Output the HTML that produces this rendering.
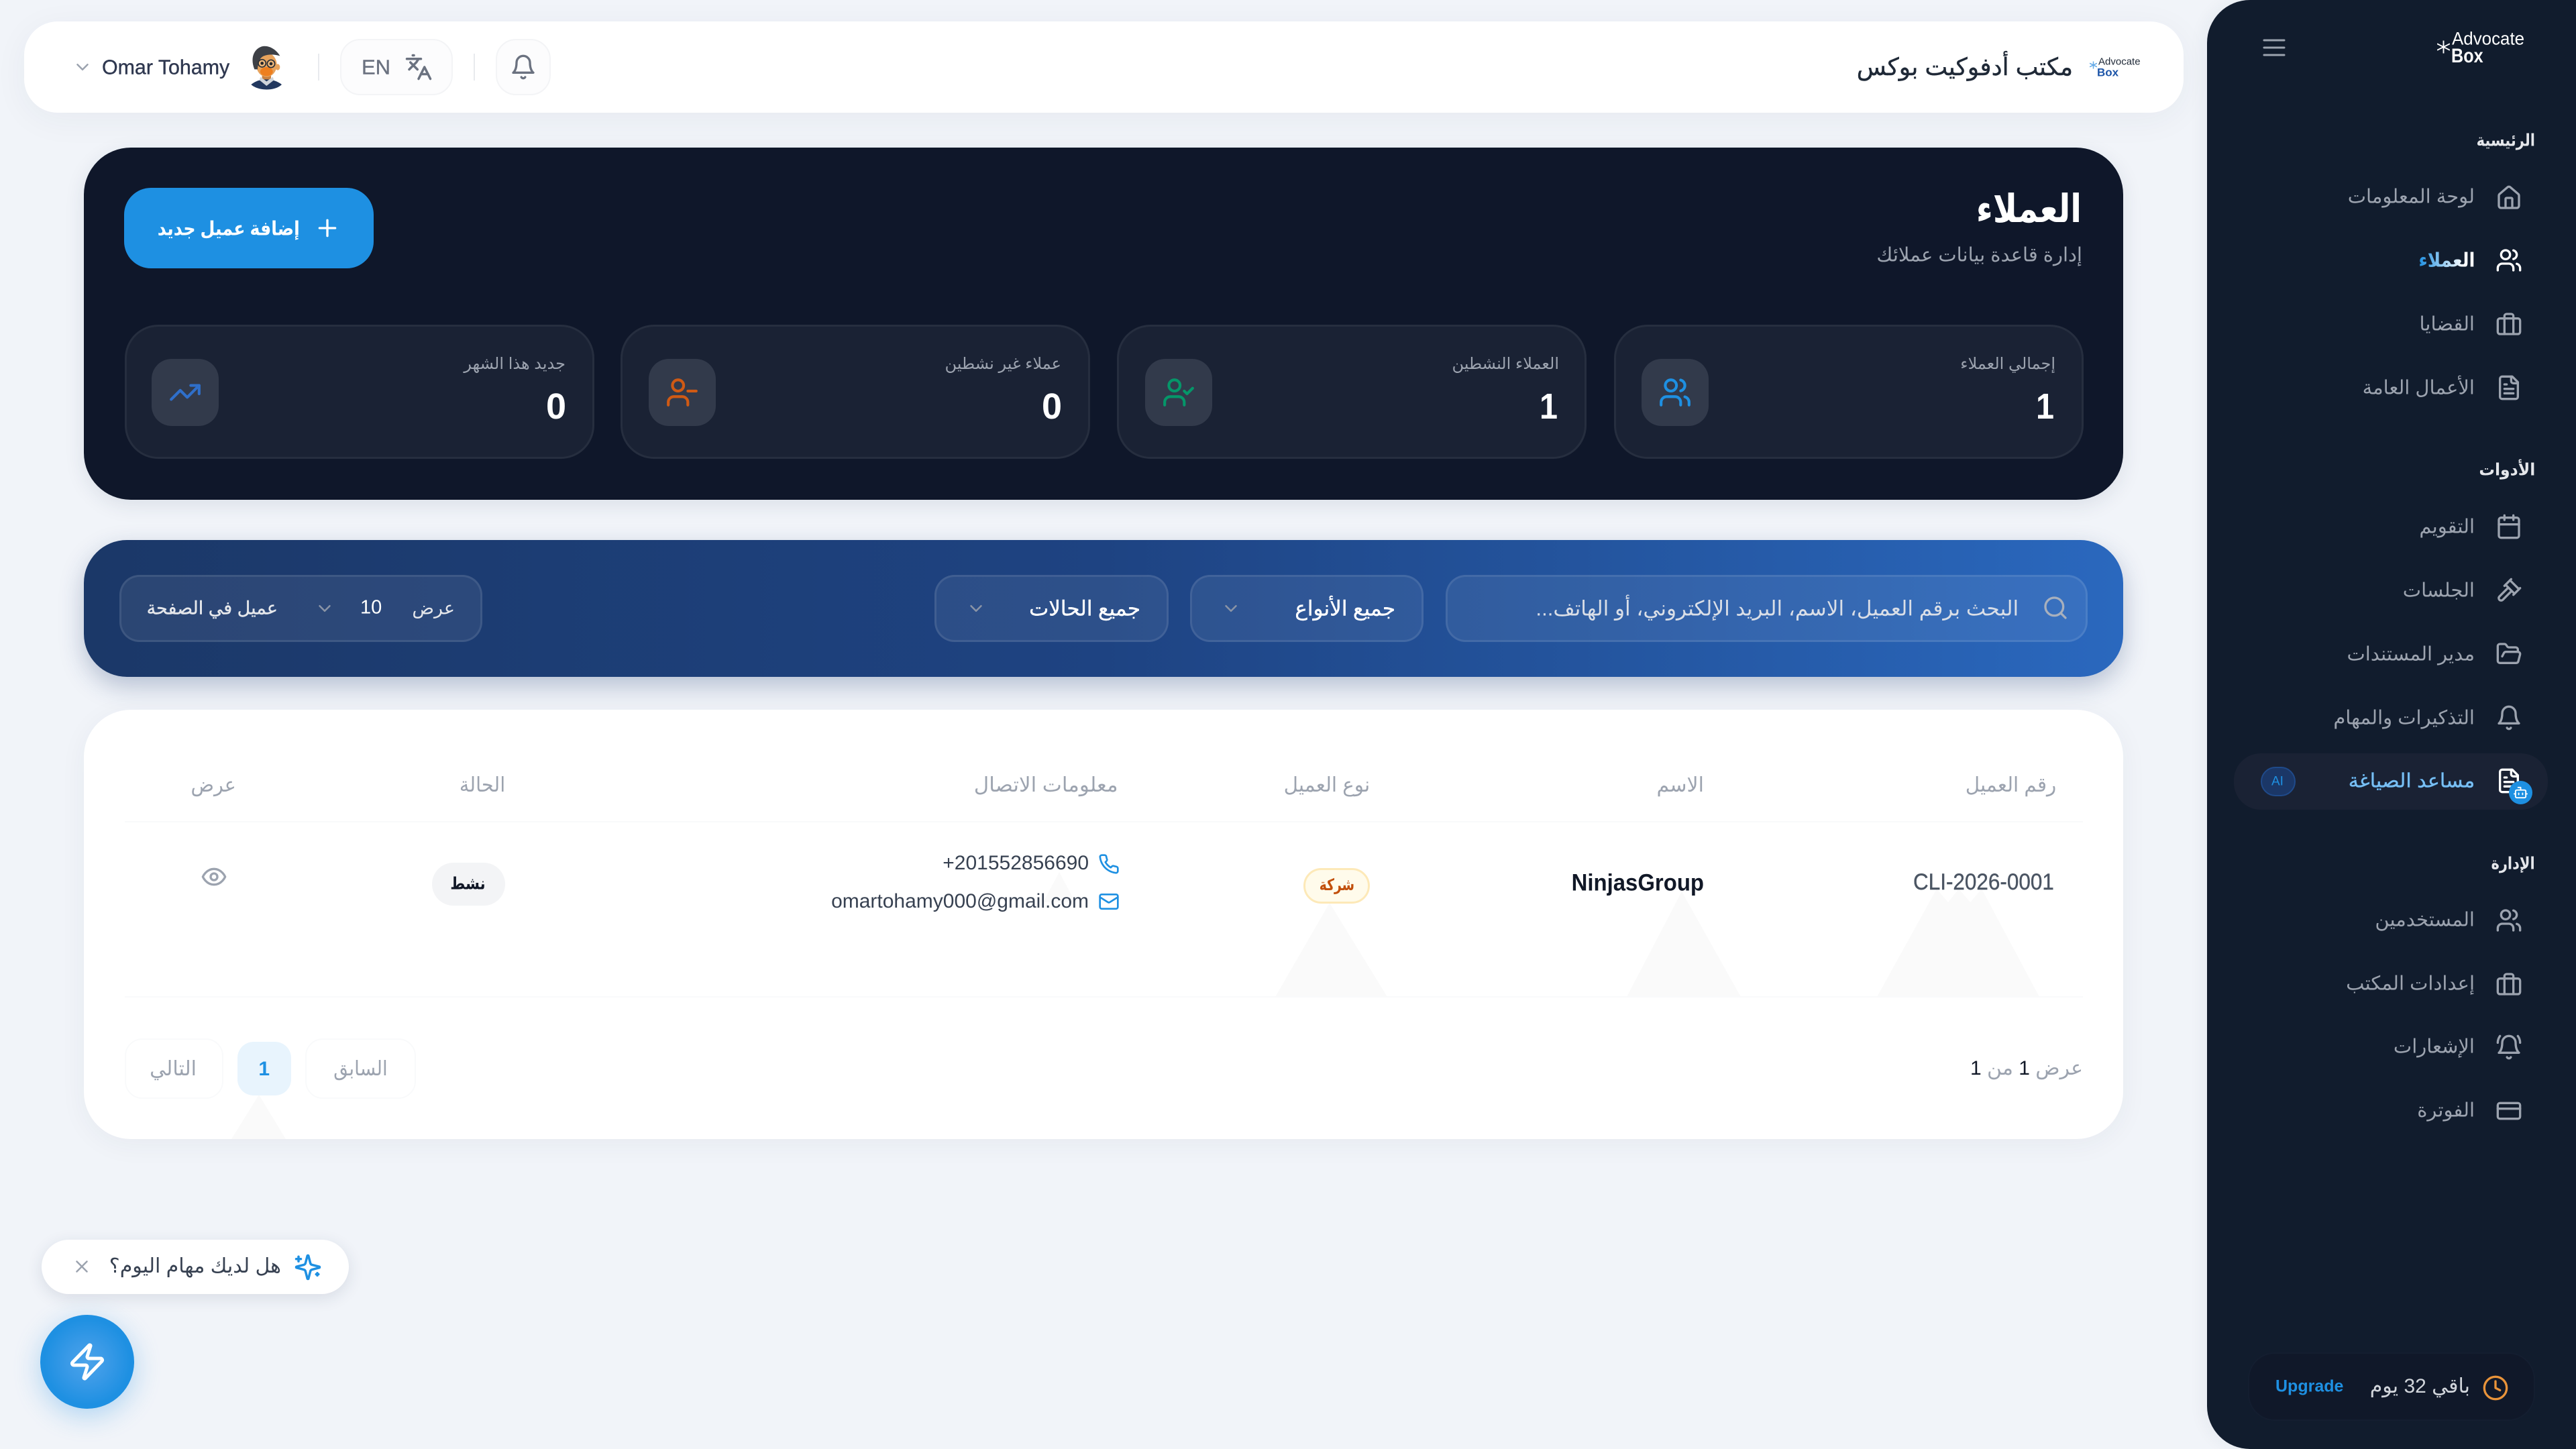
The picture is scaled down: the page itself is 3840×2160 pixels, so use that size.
<!DOCTYPE html>
<html lang="ar" dir="rtl"><head><meta charset="utf-8"><title>العملاء</title>
<style>
*{box-sizing:border-box;margin:0;padding:0}
html,body{width:3840px;height:2160px;overflow:hidden;background:#f1f4f9;font-family:"Liberation Sans","DejaVu Sans",sans-serif}
.a{position:absolute}
.t{position:absolute;white-space:nowrap;line-height:1;transform:translateY(-50%) scaleX(var(--sx,1));transform-origin:100% 50%;direction:rtl}
.l{direction:ltr}
.m{-webkit-text-stroke:.4px currentColor}
svg.i{position:absolute;fill:none;stroke:currentColor;stroke-width:2;stroke-linecap:round;stroke-linejoin:round}
.stat{position:absolute;top:484px;width:700px;height:200px;background:#1a2234;border:3px solid #262e3f;border-radius:50px}
.box{position:absolute;top:535px;width:100px;height:100px;border-radius:30px;background:#323a4b}
.lab{font-size:24px;color:#9ca3af;top:543px}
.num{font-size:54px;font-weight:700;color:#fff;top:606px}
.sel{position:absolute;top:857px;height:100px;border-radius:30px;background:rgba(255,255,255,.07);border:3px solid rgba(255,255,255,.09)}
.th{font-size:30px;color:#9ca3af;top:1171px}
.nav{font-size:29px;color:#9ca3af;right:151px}
.sec{font-size:25px;font-weight:700;color:#e5e7eb;right:61px}
.side svg.i{color:#9ca3af;width:40px;height:40px;left:3720px}
.grad{background:linear-gradient(270deg,#fff 20%,#1e90e2 100%);-webkit-background-clip:text;background-clip:text;color:transparent;font-weight:700}
</style></head><body>
<svg width="0" height="0" style="position:absolute"><defs>
<symbol id="users" viewBox="0 0 24 24"><path d="M16 21v-2a4 4 0 0 0-4-4H6a4 4 0 0 0-4 4v2"/><circle cx="9" cy="7" r="4"/><path d="M22 21v-2a4 4 0 0 0-3-3.87"/><path d="M16 3.13a4 4 0 0 1 0 7.75"/></symbol>
<symbol id="brief" viewBox="0 0 24 24"><rect x="2" y="7" width="20" height="14" rx="2"/><path d="M16 21V5a2 2 0 0 0-2-2h-4a2 2 0 0 0-2 2v16"/></symbol>
<symbol id="file" viewBox="0 0 24 24"><path d="M15 2H6a2 2 0 0 0-2 2v16a2 2 0 0 0 2 2h12a2 2 0 0 0 2-2V7Z"/><path d="M14 2v4a2 2 0 0 0 2 2h4"/><path d="M10 9H8"/><path d="M16 13H8"/><path d="M16 17H8"/></symbol>
<symbol id="bell" viewBox="0 0 24 24"><path d="M6 8a6 6 0 0 1 12 0c0 7 3 9 3 9H3s3-2 3-9"/><path d="M10.3 21a1.94 1.94 0 0 0 3.4 0"/></symbol>
<symbol id="chev" viewBox="0 0 24 24"><path d="m6 9 6 6 6-6"/></symbol>
</defs></svg>

<!-- header -->
<div class="a" style="left:36px;top:32px;width:3219px;height:136px;background:#fff;border-radius:50px;box-shadow:0 10px 50px rgba(30,50,80,.05)"></div>
<svg class="i" style="left:108px;top:85px;width:30px;height:30px;color:#9ca3af"><use href="#chev"/></svg>
<div class="t l m" style="left:152px;top:100px;font-size:31px;font-weight:500;color:#2f3850;--sx:.98;transform-origin:0 50%">Omar Tohamy</div>
<svg class="a" style="left:340px;top:50px" width="110" height="100" viewBox="0 0 330 300">
<circle cx="172" cy="152" r="104" fill="#fff"/>
<rect x="152" y="175" width="40" height="45" fill="#c9803f"/>
<path d="M103 228C125 210 150 205 172 205c23 0 48 7 68 23-30 30-105 30-137 0z" fill="#22385f"/>
<path d="M140 208l32 26 33-26-5-14-28 20-27-20z" fill="#cfd4da"/>
<ellipse cx="222" cy="150" rx="10" ry="14" fill="#e8a35c"/>
<ellipse cx="172" cy="140" rx="46" ry="54" fill="#e8a35c"/>
<ellipse cx="172" cy="170" rx="28" ry="20" fill="#ee7f1f"/>
<path d="M118 160C98 110 115 70 150 58c30-8 65 12 82 42-27-8-52-8-72 0-20 8-25 30-28 60z" fill="#3d4046"/>
<circle cx="152" cy="133" r="17" fill="#f0b97a" stroke="#2b2f36" stroke-width="5"/><circle cx="192" cy="135" r="17" fill="#f0b97a" stroke="#2b2f36" stroke-width="5"/>
<circle cx="152" cy="133" r="7" fill="#22252b"/><circle cx="192" cy="135" r="7" fill="#22252b"/>
</svg>
<div class="a" style="left:474px;top:80px;width:2px;height:40px;background:#e8eaee"></div>
<div class="a" style="left:507px;top:58px;width:168px;height:84px;border-radius:30px;background:#fcfcfd;border:2px solid #f3f4f6"></div>
<div class="t l m" style="left:539px;top:100px;font-size:31px;font-weight:500;color:#6b7280;transform-origin:0 50%">EN</div>
<svg class="i" viewBox="0 0 24 24" style="left:603px;top:79px;width:42px;height:42px;color:#6b7280"><path d="m5 8 6 6"/><path d="m4 14 6-6 2-3"/><path d="M2 5h12"/><path d="M7 2h1"/><path d="m22 22-5-10-5 10"/><path d="M14 18h6"/></svg>
<div class="a" style="left:706px;top:80px;width:2px;height:40px;background:#e8eaee"></div>
<div class="a" style="left:739px;top:58px;width:82px;height:84px;border-radius:30px;background:#fcfcfd;border:2px solid #f3f4f6"></div>
<svg class="i" style="left:760px;top:80px;width:40px;height:40px;color:#6b7280"><use href="#bell"/></svg>
<div class="t m" style="right:750px;top:100px;font-size:36px;font-weight:500;color:#1f2937">مكتب أدفوكيت بوكس</div>
<div class="t l" style="left:3128px;top:92px;font-size:15px;color:#1f2937;transform-origin:0 50%">Advocate</div>
<div class="t l" style="left:3126px;top:108px;font-size:17px;font-weight:700;color:#1d55a8;transform-origin:0 50%">Box</div>
<svg class="a" style="left:3115px;top:91px" width="11" height="12" viewBox="0 0 12 12" stroke="#62a8e6" stroke-width="1.6"><path d="M6 0v12M0 3l12 6M12 3 0 9"/></svg>

<!-- hero -->
<div class="a" style="left:125px;top:220px;width:3040px;height:525px;background:#0f172a;border-radius:70px;box-shadow:0 8px 30px rgba(30,50,80,.1)"></div>
<div class="a" style="left:185px;top:280px;width:372px;height:120px;background:#1e90e2;border-radius:40px"></div>
<svg class="i" viewBox="0 0 24 24" style="left:468px;top:320px;width:40px;height:40px;color:#fff"><path d="M5 12h14"/><path d="M12 5v14"/></svg>
<div class="t" style="right:3393px;top:342px;font-size:29px;font-weight:700;color:#fff;--sx:.87">إضافة عميل جديد</div>
<div class="t" style="right:737px;top:312px;font-size:58px;font-weight:700;color:#fff;--sx:.84">العملاء</div>
<div class="t" style="right:736px;top:381px;font-size:29px;color:#9ca3af">إدارة قاعدة بيانات عملائك</div>

<div class="stat" style="left:2406px"></div><div class="stat" style="left:1665px"></div><div class="stat" style="left:925px"></div><div class="stat" style="left:186px"></div>
<div class="box" style="left:2447px"></div><div class="box" style="left:1707px"></div><div class="box" style="left:967px"></div><div class="box" style="left:226px"></div>
<svg class="i" style="left:2472px;top:560px;width:50px;height:50px;color:#1e90e2"><use href="#users"/></svg>
<svg class="i" viewBox="0 0 24 24" style="left:1732px;top:560px;width:50px;height:50px;color:#059669"><path d="M16 21v-2a4 4 0 0 0-4-4H6a4 4 0 0 0-4 4v2"/><circle cx="9" cy="7" r="4"/><path d="m16 11 2 2 4-4"/></svg>
<svg class="i" viewBox="0 0 24 24" style="left:992px;top:560px;width:50px;height:50px;color:#d05a14"><path d="M16 21v-2a4 4 0 0 0-4-4H6a4 4 0 0 0-4 4v2"/><circle cx="9" cy="7" r="4"/><path d="M22 11h-6"/></svg>
<svg class="i" viewBox="0 0 24 24" style="left:251px;top:560px;width:50px;height:50px;color:#2f6fca"><path d="M22 7 13.500 15.500 8.500 10.500 2 17"/><path d="M16 7h6v6"/></svg>
<div class="t lab" style="right:776px">إجمالي العملاء</div>
<div class="t lab" style="right:1516px">العملاء النشطين</div>
<div class="t lab" style="right:2258px">عملاء غير نشطين</div>
<div class="t lab" style="right:2997px">جديد هذا الشهر</div>
<div class="t num l" style="right:778px;--sx:.9">1</div>
<div class="t num l" style="right:1518px;--sx:.9">1</div>
<div class="t num l" style="right:2257px">0</div>
<div class="t num l" style="right:2996px">0</div>

<!-- filter bar -->
<div class="a" style="left:125px;top:805px;width:3040px;height:204px;border-radius:64px;background:linear-gradient(90deg,#1b3868 0%,#1e4382 50%,#2a68be 100%);box-shadow:0 14px 36px rgba(30,58,110,.28)"></div>
<div class="sel" style="left:2155px;width:957px"></div>
<div class="sel" style="left:1774px;width:348px"></div>
<div class="sel" style="left:1393px;width:349px"></div>
<div class="sel" style="left:178px;width:541px"></div>
<svg class="i" viewBox="0 0 24 24" style="left:3044px;top:886px;width:40px;height:40px;color:#a8b0bd"><circle cx="11" cy="11" r="8"/><path d="m21 21-4.300-4.300"/></svg>
<div class="t" style="right:831px;top:907px;font-size:31px;color:#d9dee7;--sx:1.005">البحث برقم العميل، الاسم، البريد الإلكتروني، أو الهاتف...</div>
<div class="t m" style="right:1760px;top:907px;font-size:31px;font-weight:500;color:#fff">جميع الأنواع</div>
<svg class="i" style="left:1820px;top:892px;width:30px;height:30px;color:#8a94a6"><use href="#chev"/></svg>
<div class="t m" style="right:2140px;top:907px;font-size:31px;font-weight:500;color:#fff">جميع الحالات</div>
<svg class="i" style="left:1440px;top:892px;width:30px;height:30px;color:#8a94a6"><use href="#chev"/></svg>
<div class="t" style="right:3162px;top:907px;font-size:27px;color:#e5e7eb">عرض</div>
<div class="t l" style="left:537px;top:906px;font-size:29px;color:#fff;transform-origin:0 50%">10</div>
<svg class="i" style="left:469px;top:892px;width:30px;height:30px;color:#8a94a6"><use href="#chev"/></svg>
<div class="t m" style="right:3426px;top:907px;font-size:27px;font-weight:500;color:#e5e7eb">عميل في الصفحة</div>

<!-- table -->
<div class="a" style="left:125px;top:1058px;width:3040px;height:640px;background:#fff;border-radius:70px;box-shadow:0 8px 40px rgba(30,50,80,.05)"></div>
<svg class="a" style="left:0;top:0" width="3840" height="2160" fill="#fafafa">
<polygon points="2798,1486 2887,1325 2904,1345 2920,1325 2937,1345 2954,1325 3040,1486"/>
<polygon points="2425,1486 2507,1329 2595,1486"/>
<polygon points="1901,1486 1982,1346 2068,1486"/>
<polygon points="1555,1345 1579,1300 1603,1345"/>
<polygon points="345,1698 386,1632 426,1698"/>
</svg>
<div class="a" style="left:186px;top:1224px;width:2919px;height:2px;background:#f9fafb"></div>
<div class="a" style="left:186px;top:1485px;width:2919px;height:2px;background:#f9fafb"></div>
<div class="t th" style="right:775px;--sx:.98">رقم العميل</div>
<div class="t th" style="right:1300px">الاسم</div>
<div class="t th" style="right:1798px;--sx:.98">نوع العميل</div>
<div class="t th" style="right:2173px;--sx:1.03">معلومات الاتصال</div>
<div class="t th" style="right:3087px;--sx:.96">الحالة</div>
<div class="t th" style="right:3488px;--sx:.95">عرض</div>
<div class="t l m" style="right:778px;top:1315px;font-size:34px;font-weight:500;color:#4b5563;--sx:.925">CLI-2026-0001</div>
<div class="t l" style="right:1300px;top:1316px;font-size:35px;font-weight:700;color:#111827;--sx:.94">NinjasGroup</div>
<div class="a" style="left:1943px;top:1294px;width:99px;height:53px;border-radius:27px;background:#fffbeb;border:3px solid #fde9b8"></div>
<div class="t" style="right:1821px;top:1320px;font-size:24px;font-weight:700;color:#c2500c;--sx:.78">شركة</div>
<div class="t l" style="right:2217px;top:1287px;font-size:30px;color:#374151">+201552856690</div>
<div class="t l" style="right:2217px;top:1344px;font-size:30px;color:#374151">omartohamy000@gmail.com</div>
<svg class="i" viewBox="0 0 24 24" style="left:1637px;top:1272px;width:32px;height:32px;color:#1e90e2"><path d="M22 16.920v3a2 2 0 0 1-2.180 2 19.790 19.790 0 0 1-8.630-3.070 19.500 19.500 0 0 1-6-6 19.790 19.790 0 0 1-3.070-8.670A2 2 0 0 1 4.110 2h3a2 2 0 0 1 2 1.720 12.840 12.840 0 0 0 .7 2.810 2 2 0 0 1-.45 2.110L8.090 9.910a16 16 0 0 0 6 6l1.270-1.270a2 2 0 0 1 2.110-.45 12.840 12.840 0 0 0 2.810.7A2 2 0 0 1 22 16.920z"/></svg>
<svg class="i" viewBox="0 0 24 24" style="left:1637px;top:1328px;width:32px;height:32px;color:#1e90e2"><rect x="2" y="4" width="20" height="16" rx="2"/><path d="m22 7-8.970 5.700a1.940 1.940 0 0 1-2.060 0L2 7"/></svg>
<div class="a" style="left:644px;top:1286px;width:109px;height:64px;border-radius:32px;background:#f3f4f6"></div>
<div class="t" style="right:3116px;top:1318px;font-size:25px;font-weight:700;color:#111827;--sx:.85">نشط</div>
<svg class="i" viewBox="0 0 24 24" style="left:299px;top:1287px;width:40px;height:40px;color:#9ca3af"><path d="M2 12s3-7 10-7 10 7 10 7-3 7-10 7-10-7-10-7Z"/><circle cx="12" cy="12" r="3"/></svg>
<div class="a" style="left:186px;top:1548px;width:147px;height:90px;border-radius:26px;background:#fff;border:2px solid #f9fafb"></div>
<div class="a" style="left:354px;top:1553px;width:80px;height:80px;border-radius:24px;background:#e8f4fd"></div>
<div class="a" style="left:455px;top:1548px;width:165px;height:90px;border-radius:26px;background:#fff;border:2px solid #f9fafb"></div>
<div class="t" style="right:3547px;top:1594px;font-size:30px;color:#9ca3af">التالي</div>
<div class="t l" style="right:3438px;top:1594px;font-size:30px;font-weight:700;color:#1e90e2">1</div>
<div class="t" style="right:3262px;top:1594px;font-size:30px;color:#9ca3af;--sx:.93">السابق</div>
<div class="t" style="right:735px;top:1593px;font-size:30px;color:#9ca3af">عرض <span style="color:#111827">1</span> من <span style="color:#111827">1</span></div>

<!-- floating -->
<div class="a" style="left:62px;top:1848px;width:458px;height:81px;border-radius:41px;background:#fff;box-shadow:0 6px 24px rgba(30,50,80,.12)"></div>
<svg class="i" viewBox="0 0 24 24" style="left:438px;top:1868px;width:42px;height:42px;color:#1e90e2;transform:scaleX(-1)"><path d="M9.937 15.500A2 2 0 0 0 8.500 14.063l-6.135-1.582a.5.5 0 0 1 0-.962L8.500 9.936A2 2 0 0 0 9.937 8.500l1.582-6.135a.5.5 0 0 1 .963 0L14.063 8.500A2 2 0 0 0 15.500 9.937l6.135 1.581a.5.5 0 0 1 0 .964L15.500 14.063a2 2 0 0 0-1.437 1.437l-1.582 6.135a.5.5 0 0 1-.963 0z"/><path d="M20 3v4"/><path d="M22 5h-4"/><path d="M4 17v2"/><path d="M5 18H3"/></svg>
<div class="t" style="right:3421px;top:1888px;font-size:30px;color:#374151">هل لديك مهام اليوم؟</div>
<svg class="i" viewBox="0 0 24 24" style="left:107px;top:1873px;width:30px;height:30px;color:#9ca3af"><path d="M18 6 6 18"/><path d="m6 6 12 12"/></svg>
<div class="a" style="left:60px;top:1960px;width:140px;height:140px;border-radius:50%;background:radial-gradient(circle,#4aa3ea 0%,#3a9ae7 30%,#1e90e2 65%);box-shadow:0 10px 40px rgba(30,144,226,.32)"></div>
<svg class="i" viewBox="0 0 24 24" style="left:100px;top:2000px;width:60px;height:60px;color:#fff"><path d="M4 14a1 1 0 0 1-.78-1.630l9.900-10.200a.5.5 0 0 1 .86.46l-1.920 6.020A1 1 0 0 0 13 10h7a1 1 0 0 1 .78 1.630l-9.900 10.200a.5.5 0 0 1-.86-.46l1.920-6.020A1 1 0 0 0 11 14z"/></svg>

<!-- sidebar -->
<div class="side">
<div class="a" style="left:3290px;top:0;width:550px;height:2160px;background:#111c2d;border-radius:64px 0 0 64px;box-shadow:-6px 0 24px rgba(30,50,80,.05)"></div>
<svg class="a" style="left:3372px;top:56px" width="36" height="30" stroke="#9ca3af" stroke-width="3" stroke-linecap="round"><path d="M3 4h30M3 15h30M3 26h30"/></svg>
<div class="t l" style="left:3655px;top:58px;font-size:27px;color:#fff;transform-origin:0 50%;--sx:.96">Advocate</div>
<div class="t l" style="left:3654px;top:84px;font-size:30px;font-weight:700;color:#fff;transform-origin:0 50%;--sx:.84">Box</div>
<svg class="a" style="left:3633px;top:60px" width="19" height="20" viewBox="0 0 12 12" stroke="#fff" stroke-width="1.200"><path d="M6 0v12M0 3l12 6M12 3 0 9"/></svg>

<div class="t sec" style="top:210px;--sx:.84">الرئيسية</div>
<div class="t nav" style="top:294px">لوحة المعلومات</div>
<svg class="i" viewBox="0 0 24 24" style="top:275px"><path d="M15 21v-8a1 1 0 0 0-1-1h-4a1 1 0 0 0-1 1v8"/><path d="M3 10a2 2 0 0 1 .709-1.528l7-5.999a2 2 0 0 1 2.582 0l7 5.999A2 2 0 0 1 21 10v9a2 2 0 0 1-2 2H5a2 2 0 0 1-2-2z"/></svg>
<div class="t nav grad" style="top:389px;--sx:.9">العملاء</div>
<svg class="i" style="top:368px;color:#fff"><use href="#users"/></svg>
<div class="t nav" style="top:484px">القضايا</div>
<svg class="i" style="top:463px"><use href="#brief"/></svg>
<div class="t nav" style="top:579px">الأعمال العامة</div>
<svg class="i" style="top:558px"><use href="#file"/></svg>

<div class="t sec" style="top:701px;--sx:.94">الأدوات</div>
<div class="t nav" style="top:786px">التقويم</div>
<svg class="i" viewBox="0 0 24 24" style="top:765px"><path d="M8 2v4"/><path d="M16 2v4"/><rect x="3" y="4" width="18" height="18" rx="2"/><path d="M3 10h18"/></svg>
<div class="t nav" style="top:881px">الجلسات</div>
<svg class="i" viewBox="0 0 24 24" style="top:860px"><path d="m14.500 12.500-8 8a2.119 2.119 0 1 1-3-3l8-8"/><path d="m16 16 6-6"/><path d="m8 8 6-6"/><path d="m9 7 8 8"/><path d="m21 11-8-8"/></svg>
<div class="t nav" style="top:976px">مدير المستندات</div>
<svg class="i" viewBox="0 0 24 24" style="top:955px"><path d="m6 14 1.500-2.900A2 2 0 0 1 9.240 10H20a2 2 0 0 1 1.940 2.500l-1.540 6a2 2 0 0 1-1.950 1.500H4a2 2 0 0 1-2-2V5a2 2 0 0 1 2-2h3.900a2 2 0 0 1 1.690.9l.81 1.200a2 2 0 0 0 1.670.9H18a2 2 0 0 1 2 2v2"/></svg>
<div class="t nav" style="top:1071px">التذكيرات والمهام</div>
<svg class="i" style="top:1050px"><use href="#bell"/></svg>
<div class="a" style="left:3330px;top:1123px;width:468px;height:84px;border-radius:40px;background:#1a2234"></div>
<div class="t nav" style="top:1165px;font-weight:400;-webkit-text-stroke:.5px #5fb0ee;color:#7cc0f2;--sx:1.04">مساعد الصياغة</div>
<svg class="i" style="top:1144px;color:#fff"><use href="#file"/></svg>
<div class="a" style="left:3740px;top:1164px;width:35px;height:35px;border-radius:50%;background:#1e90e2"></div>
<svg class="i" viewBox="0 0 24 24" style="left:3746px;top:1170px;width:23px;height:23px;color:#fff"><path d="M12 8V4H8"/><rect x="4" y="8" width="16" height="12" rx="2"/><path d="M2 14h2"/><path d="M20 14h2"/><path d="M15 13v2"/><path d="M9 13v2"/></svg>
<div class="a" style="left:3370px;top:1143px;width:52px;height:44px;border-radius:22px;background:#1b3767;border:2px solid #1f4a8a"></div>
<div class="t l" style="left:3386px;top:1165px;font-size:19px;font-weight:500;color:#1e90e2;transform-origin:0 50%">AI</div>

<div class="t sec" style="top:1288px;--sx:.84">الإدارة</div>
<div class="t nav" style="top:1372px">المستخدمين</div>
<svg class="i" style="top:1352px"><use href="#users"/></svg>
<div class="t nav" style="top:1467px">إعدادات المكتب</div>
<svg class="i" style="top:1447px"><use href="#brief"/></svg>
<div class="t nav" style="top:1561px">الإشعارات</div>
<svg class="i" viewBox="0 0 24 24" style="top:1541px"><path d="M10.300 21a1.940 1.940 0 0 0 3.400 0"/><path d="M22 8c0-2.300-.8-4.300-2-6"/><path d="M6 8a6 6 0 0 1 12 0c0 7 3 9 3 9H3s3-2 3-9"/><path d="M4 2C2.800 3.700 2 5.700 2 8"/></svg>
<div class="t nav" style="top:1656px">الفوترة</div>
<svg class="i" viewBox="0 0 24 24" style="top:1636px"><rect x="2" y="5" width="20" height="14" rx="2"/><path d="M2 10h20"/></svg>

<div class="a" style="left:3351px;top:2016px;width:428px;height:102px;border-radius:40px;background:#101829;border:2px solid #141e30"></div>
<svg class="i" viewBox="0 0 24 24" style="left:3700px;top:2049px;width:40px;height:40px;color:#e8933a"><circle cx="12" cy="12" r="10"/><path d="M12 6v6l4 2"/></svg>
<div class="t" style="right:158px;top:2067px;font-size:30px;color:#d1d5db">باقي 32 يوم</div>
<div class="t l" style="left:3392px;top:2067px;font-size:25px;font-weight:700;color:#1e90e2;transform-origin:0 50%">Upgrade</div>
</div>
</body></html>
